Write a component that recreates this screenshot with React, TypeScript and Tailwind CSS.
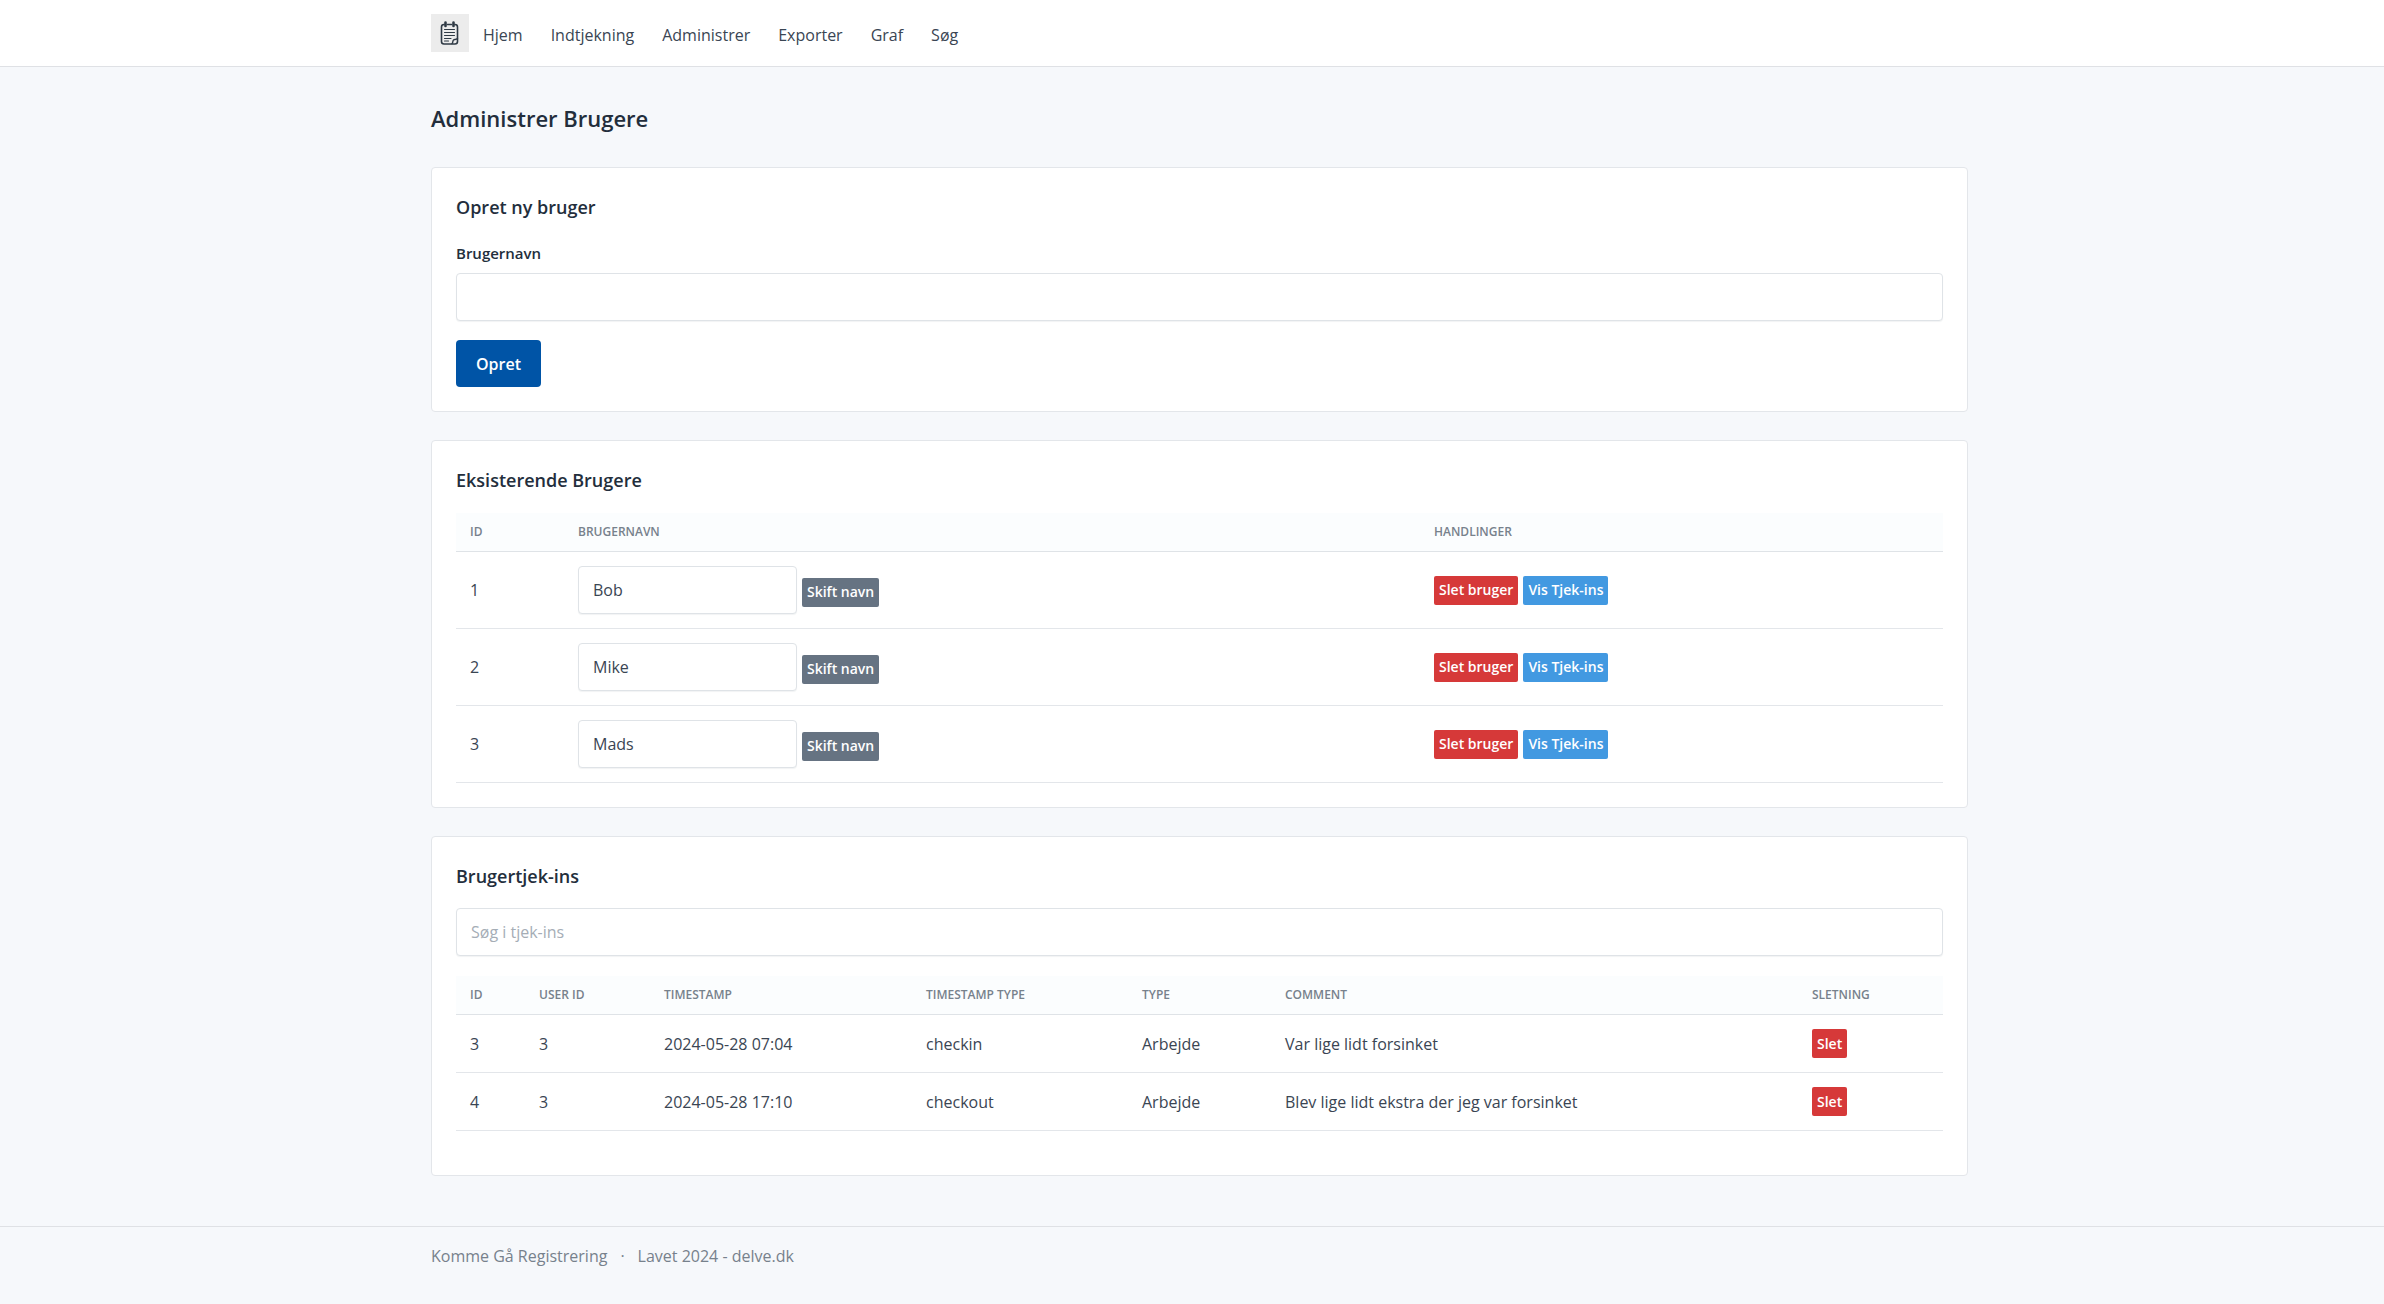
import React from "react";
import clsx from "clsx";

const navLinks = ["Hjem", "Indtjekning", "Administrer", "Exporter", "Graf", "Søg"];

const users = [
  { id: 1, name: "Bob" },
  { id: 2, name: "Mike" },
  { id: 3, name: "Mads" },
];

const checkins = [
  { id: 3, userId: 3, timestamp: "2024-05-28 07:04", kind: "checkin", type: "Arbejde", comment: "Var lige lidt forsinket" },
  { id: 4, userId: 3, timestamp: "2024-05-28 17:10", kind: "checkout", type: "Arbejde", comment: "Blev lige lidt ekstra der jeg var forsinket" },
];

const inputClass =
  "h-12 rounded border border-[#dfe3e7] bg-white px-[14px] text-base text-[#3a4553] shadow-[0_1px_1px_rgba(35,46,60,0.06)] placeholder:text-[#a5adb6]";

function Container({ children, className }: { children: React.ReactNode; className?: string }) {
  return (
    <div className="pl-[15px]">
      <div className={clsx("mx-auto w-full max-w-[1537px]", className)}>{children}</div>
    </div>
  );
}

function Card({ title, className, children }: { title: string; className?: string; children: React.ReactNode }) {
  return (
    <section className={clsx("rounded border border-[#e3e6ea] bg-white px-6 pt-[25px]", className)}>
      <h3 className="text-lg leading-7 font-semibold text-[#232e3c]">{title}</h3>
      {children}
    </section>
  );
}

function SmallButton({ color, className, children }: { color: "gray" | "red" | "blue"; className?: string; children: React.ReactNode }) {
  return (
    <button
      type="button"
      className={clsx(
        "h-[29px] rounded-xs px-[5px] text-sm leading-5 font-semibold whitespace-nowrap text-white",
        color === "gray" && "bg-[#667382]",
        color === "red" && "bg-[#d63939]",
        color === "blue" && "bg-[#4299e1]",
        className
      )}
    >
      {children}
    </button>
  );
}

function Th({ children, className }: { children: React.ReactNode; className?: string }) {
  return (
    <th
      scope="col"
      className={clsx("h-[39px] border-b border-[#dfe3e7] bg-[#fbfdfe] px-[14px] text-left text-xs font-semibold text-[#77818c] uppercase", className)}
    >
      {children}
    </th>
  );
}

function Td({ children }: { children: React.ReactNode }) {
  return <td className="border-b border-[#e3e6ea] px-[14px]">{children}</td>;
}

function Logo() {
  return (
    <svg viewBox="0 0 38 38" className="size-[38px] bg-[#ececec]" fill="none" stroke="#2f3a45" strokeLinecap="round" strokeLinejoin="round" aria-label="Komme Gå Registrering">
      <path d="M13 10.5a2.500 2.500 0 0 0-2.500 2.500v14.500a2.500 2.500 0 0 0 2.500 2.500h11a2.500 2.500 0 0 0 2.500-2.500V13a2.500 2.500 0 0 0-2.500-2.500M16.500 10.500h4" strokeWidth="1.6" />
      <path d="M21 29.500c1.200-.8.500-2.700 1.500-3.500s2.500 0 4-1.500" strokeWidth="1.4" />
      <path d="M14.500 8.500v3.500M22.500 8.500v3.500" strokeWidth="2.600" />
      <path d="M13.500 15.500h10M13.500 18.500h10M13.500 21.500h10M13.500 24.500h6.500M13.500 27h4" strokeWidth="1.1" />
    </svg>
  );
}

function Navbar() {
  return (
    <header className="border-b border-[#dfe1e5] bg-white">
      <Container className="flex h-[66px] items-center">
        <a href="#">
          <Logo />
        </a>
        <nav className="ml-[14px] flex gap-7 pt-1 text-[#3a4553]">
          {navLinks.map((link) => (
            <a key={link} href="#">
              {link}
            </a>
          ))}
        </nav>
      </Container>
    </header>
  );
}

function CreateUser() {
  return (
    <Card title="Opret ny bruger" className="pb-6">
      <form>
        <label htmlFor="username" className="mt-5 block text-[15px] leading-6 font-semibold text-[#232e3c]">
          Brugernavn
        </label>
        <input id="username" type="text" className={clsx(inputClass, "mt-2 block w-full")} />
        <button type="button" className="mt-[19px] block h-[47px] rounded bg-[#0054a6] px-5 pt-px font-semibold text-white">
          Opret
        </button>
      </form>
    </Card>
  );
}

function UserTable() {
  return (
    <Card title="Eksisterende Brugere" className="pb-6">
      <table className="mt-[19px] w-full table-fixed border-separate border-spacing-0">
        <thead>
          <tr>
            <Th className="w-[108px]">ID</Th>
            <Th>Brugernavn</Th>
            <Th className="w-[523px]">Handlinger</Th>
          </tr>
        </thead>
        <tbody>
          {users.map((user) => (
            <tr key={user.id} className="h-[77px]">
              <Td>{user.id}</Td>
              <Td>
                <div className="flex items-center gap-[5px]">
                  <input type="text" aria-label="Brugernavn" defaultValue={user.name} className={clsx(inputClass, "w-[219px]")} />
                  <SmallButton color="gray" className="mt-1">
                    Skift navn
                  </SmallButton>
                </div>
              </Td>
              <Td>
                <div className="flex gap-[5px]">
                  <SmallButton color="red">Slet bruger</SmallButton>
                  <SmallButton color="blue">Vis Tjek-ins</SmallButton>
                </div>
              </Td>
            </tr>
          ))}
        </tbody>
      </table>
    </Card>
  );
}

function CheckinTable() {
  return (
    <Card title="Brugertjek-ins" className="pb-11">
      <input type="search" aria-label="Søg i tjek-ins" placeholder="Søg i tjek-ins" className={clsx(inputClass, "mt-[18px] block w-full")} />
      <table className="mt-5 w-full table-fixed border-separate border-spacing-0">
        <thead>
          <tr>
            <Th className="w-[69px]">ID</Th>
            <Th className="w-[125px]">User ID</Th>
            <Th className="w-[262px]">Timestamp</Th>
            <Th className="w-[216px]">Timestamp type</Th>
            <Th className="w-[143px]">Type</Th>
            <Th>Comment</Th>
            <Th className="w-[145px]">Sletning</Th>
          </tr>
        </thead>
        <tbody>
          {checkins.map((row) => (
            <tr key={row.id} className="h-[58px]">
              <Td>{row.id}</Td>
              <Td>{row.userId}</Td>
              <Td>{row.timestamp}</Td>
              <Td>{row.kind}</Td>
              <Td>{row.type}</Td>
              <Td>{row.comment}</Td>
              <Td>
                <SmallButton color="red">Slet</SmallButton>
              </Td>
            </tr>
          ))}
        </tbody>
      </table>
    </Card>
  );
}

export default function App() {
  return (
    <div className="min-h-screen bg-[#f6f8fb] font-['Open_Sans','Noto_Sans',sans-serif] text-base text-[#3a4553]">
      <Navbar />
      <Container>
        <main>
          <h2 className="pt-[35px] text-[22px] leading-8 font-semibold text-[#232e3c]">Administrer Brugere</h2>
          <div className="mt-[33px] flex flex-col gap-7">
            <CreateUser />
            <UserTable />
            <CheckinTable />
          </div>
        </main>
      </Container>
      <footer className="mt-[50px] border-t border-[#dfe1e5] text-[#77818c]">
        <Container className="flex gap-[13px] py-[17px]">
          <span>Komme Gå Registrering</span>
          <span>·</span>
          <span>Lavet 2024 - delve.dk</span>
        </Container>
      </footer>
    </div>
  );
}
